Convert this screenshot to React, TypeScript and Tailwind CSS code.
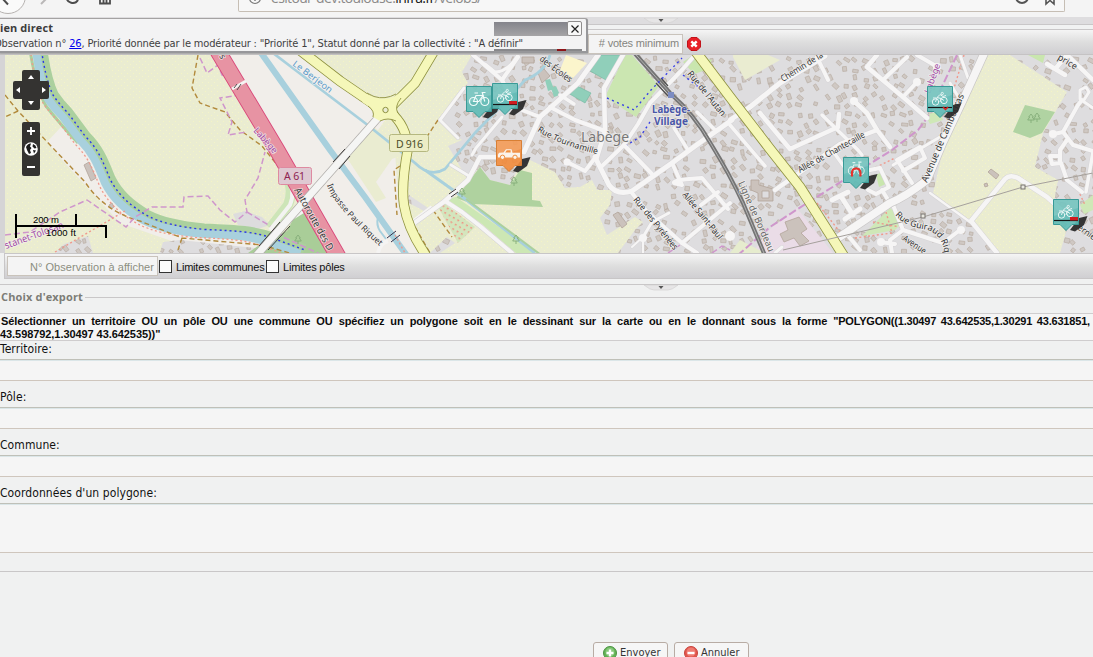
import React from "react";

type Pt = [number, number];

const RESIDENTIAL = [
  "472,55 462,72 468,83 440,117 440,123 462,140 448,146 468,180 480,167 490,180 510,185 518,168 530,160 555,172 565,188 580,187 592,180 597,190 612,190 610,205 600,218 607,235 635,217 643,222 635,230 618,253 997,253 970,223 933,193 943,150 985,55",
  "1010,55 1067,92 1043,133 1035,167 1058,180 1053,207 1066,232 1060,253 1093,253 1093,55",
  "55,253 64,244 88,236 93,253",
  "160,253 163,242 180,240 255,248 262,253",
  "409,195 428,208 424,211 407,202",
  "430,253 447,237 455,243 440,253",
];

const MINOR: { d: string; w: number }[] = [
  { d: "M598 55 L578 83 L540 117 L524 152", w: 5 },
  { d: "M500 157 H480 L468 180 L445 201 L410 226", w: 4.5 },
  { d: "M445 201 L462 212 L480 226 L512 253", w: 4 },
  { d: "M540 117 L517 108 L502 80 L473 55", w: 4 },
  { d: "M502 80 L518 57", w: 4 },
  { d: "M550 107 L575 120 L605 131", w: 4 },
  { d: "M560 95 L574 104", w: 3.5 },
  { d: "M623 55 L604 88 L605 131 L597 157", w: 4.5 },
  { d: "M595 157 L609 185 Q617 196 632 191 L672 163 L702 141 L732 120", w: 5 },
  { d: "M601 167 L624 145 L638 124 L650 103 L682 70 L695 55", w: 4 },
  { d: "M624 145 L652 174", w: 4 },
  { d: "M567 162 L585 171 L595 158", w: 4 },
  { d: "M632 193 L647 212 L682 243 L697 253", w: 4 },
  { d: "M682 243 L730 203", w: 4 },
  { d: "M672 163 L682 185 L674 183 Q672 180 702 178 L728 209", w: 4 },
  { d: "M701 205 L718 192", w: 4 },
  { d: "M643 237 L652 222 L669 213", w: 3 },
  { d: "M643 237 L643 253 M643 237 L632 247", w: 2 },
  { d: "M674 128 L688 150", w: 3.5 },
  { d: "M697 112 L716 131", w: 3.5 },
  { d: "M485 64 L495 72 Q508 72 518 55", w: 3 },
  { d: "M464 88 L440 120 L458 138", w: 3 },
  { d: "M451 165 L469 176", w: 3 },
  { d: "M502 117 L476 148 L472 155", w: 3 },
  { d: "M750 107 L780 83 L825 56", w: 5 },
  { d: "M760 113 L790 149 L838 127 L839 114", w: 4.5 },
  { d: "M730 120 L750 107", w: 4.5 },
  { d: "M822 115 L858 150 L862 155", w: 3.5 },
  { d: "M817 57 L828 80", w: 4 },
  { d: "M854 101 L867 113 L877 130 L890 147", w: 4.5 },
  { d: "M877 130 L840 144 L775 190", w: 4.5 },
  { d: "M832 150 L845 168", w: 3.5 },
  { d: "M877 55 L867 67 L903 97 L927 118", w: 4.5 },
  { d: "M907 57 L883 80 M903 97 L917 82 M917 55 L936 66", w: 4 },
  { d: "M950 83 L962 103", w: 3 },
  { d: "M960 55 L968 78", w: 3 },
  { d: "M897 160 L912 183 M897 160 L920 147 L925 158 L903 171", w: 4 },
  { d: "M870 170 L880 168 L889 187 L876 194 L868 190 M882 190 L890 203", w: 4 },
  { d: "M832 200 L848 192 M842 198 L853 215 M845 219 L860 209", w: 5 },
  { d: "M940 137 L893 165", w: 3 },
  { d: "M893 205 L903 230 L943 243 L960 230", w: 4 },
  { d: "M903 230 L890 240 L892 253 M880 242 L895 244", w: 4 },
  { d: "M845 232 L860 250", w: 4 },
  { d: "M930 193 L970 222", w: 2.5 },
  { d: "M997 253 L971 221 L1005 179 Q1010 174 1018 178 L1047 197 L1060 209", w: 4.5 },
  { d: "M1047 64 L1065 75 M1056 68 L1067 55 L1093 80", w: 4.5 },
  { d: "M1082 100 L1078 105 L1063 132 L1054 134", w: 4 },
  { d: "M1063 132 L1073 145 L1093 151 M1060 156 L1050 156 L1052 164 L1061 163 L1067 180 L1082 192 M1060 163 V150 L1067 140", w: 4 },
  { d: "M1093 108 L1080 99 L1080 90 L1086 87 L1089 92 L1084 100", w: 3 },
  { d: "M1086 192 L1093 152", w: 3.5 },
  { d: "M730 125 L765 166", w: 3.5 },
  { d: "M775 253 L782 247", w: 3 },
];

const RIVER =
  "M36 50 Q40 82 48 99 Q54 108 63 117 L80 140 C94 154 98 166 105 183 Q116 205 143 220 Q162 230 200 233.500 C235 235 250 236 267 242 L300 254";
const RAILWAY = "M630 48 L670 93 Q694 114 711 144 Q729 173 743 203 L766 258";
const AVENUE = "M988 45 L963 100 L943 142 L927 180 Q905 197 890 203 L838 238";

function seeded(seed: number) {
  let s = seed;
  return () => {
    s = (s * 16807) % 2147483647;
    return s / 2147483647;
  };
}

function makeHouses(): string {
  const rnd = seeded(4711);
  let d = "";
  for (let y = 58; y < 253; y += 9) {
    for (let x = 8; x < 1093; x += 9.5) {
      const keep = rnd();
      const cx = x + rnd() * 5;
      const cy = y + rnd() * 5;
      const a = rnd() * 1.5;
      const w = 1.7 + rnd() * 1.5;
      const h = 1.4 + rnd() * 0.9;
      if (keep < 0.22) continue;
      const pts = ([[-w, -h], [w, -h], [w, h], [-w, h]] as Pt[]).map(([px, py]) => {
        const qx = cx + px * Math.cos(a) - py * Math.sin(a);
        const qy = cy + px * Math.sin(a) + py * Math.cos(a);
        return `${qx.toFixed(1)} ${qy.toFixed(1)}`;
      });
      d += `M${pts.join("L")}Z`;
    }
  }
  return d;
}

const HOUSES = makeHouses();

function Label(props: {
  x: number; y: number; r?: number; len?: number; size?: number; fill?: string; bold?: boolean; children: string;
}) {
  const { x, y, r = 0, len, size = 9, fill = "#333", bold, children } = props;
  return (
    <text
      x={x}
      y={y}
      transform={`rotate(${r} ${x} ${y})`}
      textLength={len}
      lengthAdjust="spacingAndGlyphs"
      fontSize={size}
      fontFamily="Noto Sans, sans-serif"
      fontWeight={bold ? 700 : 400}
      fill={fill}
      stroke="#f4f2f0"
      strokeWidth={1.6}
      strokeOpacity={0.75}
      paintOrder="stroke"
    >
      {children}
    </text>
  );
}

function CurvedLabel({ id, d, size = 8.5, children }: { id: string; d: string; size?: number; children: string }) {
  return (
    <>
      <path id={id} d={d} fill="none" />
      <text fontSize={size} fontFamily="Noto Sans, sans-serif" fill="#333" stroke="#f4f2f0" strokeWidth={1.6} strokeOpacity={0.75} paintOrder="stroke">
        <textPath href={`#${id}`}>{children}</textPath>
      </text>
    </>
  );
}

function Bike() {
  return (
    <g fill="none" stroke="#f1fbfa" strokeWidth={1.2}>
      <circle cx={7.5} cy={15.5} r={4} />
      <circle cx={18.8} cy={15.5} r={4} />
      <path d="M7.5 15.5 L10 9.5 H17 L12.8 15.5 Z M17 9.5 L18.8 15.5 M8.5 7 H12 M17 9.5 L16.3 6.5 H19.5" />
    </g>
  );
}

function Rider() {
  return (
    <g fill="none" stroke="#e8f6f5" strokeWidth={1}>
      <circle cx={8.5} cy={16} r={3.2} />
      <circle cx={17} cy={14.5} r={3.2} />
      <path d="M8.500 16 L10 11.500 L14 12.500 L13 16 M10 11.500 L13 8.500 L16 10.500 L19 9.500 M14 12.500 L17 14.500 M6 12 H9" />
      <circle cx={15.300} cy={7.500} r={1.100} />
    </g>
  );
}

function Marker({ x, y, color, edge, kind }: { x: number; y: number; color: string; edge: string; kind: string }) {
  return (
    <g transform={`translate(${x} ${y})`}>
      <path d="M17 31 L26 19 L34.5 17 L31 26 L22 32.5 Z" fill="#2b2b2a" fillOpacity={0.94} />
      <path d="M0.5 0.5 H25.5 V25.5 H19 L13 31.5 L7 25.5 H0.5 Z" fill={color} fillOpacity={0.9} stroke={edge} />
      <path d="M1 1 H25 V9 L1 17 Z" fill="#fff" fillOpacity={0.14} />
      {kind === "bike" && <Bike />}
      {kind === "rider" && (
        <>
          <Rider />
          <path d="M1 21.5 H25" stroke="#151515" strokeWidth={1.2} />
          <rect x={17} y={18} width={8} height={3.4} fill="#cf1b1f" />
        </>
      )}
      {kind === "rider2" && (
        <>
          <Rider />
          <path d="M1 21.5 H25" stroke="#151515" strokeWidth={1.2} />
          <path d="M16 21 L18.5 23.5 L21 21" fill="none" stroke="#dd1c1c" strokeWidth={1.5} />
        </>
      )}
      {kind === "arch" && (
        <>
          <g transform="translate(2.500 -1) scale(0.82 0.95)" opacity={0.85}>
            <Bike />
          </g>
          <path d="M9 19.5 V15.500 A4.2 4.2 0 0 1 17.4 15.500 V19.5" fill="none" stroke="#e6332c" strokeWidth={2.200} />
        </>
      )}
      {kind === "truck" && (
        <>
          <path d="M2 14.5 L3 12.8 L7.5 12.5 L10 9.3 H15.5 L16.5 12.8 H24 V17.5 H2 Z" fill="#fbf3ea" />
          <path d="M9.2 12.5 L10.8 10.3 H14.6 V12.5 Z" fill="#f08f3e" />
          <circle cx={6.5} cy={17.3} r={2.2} fill="#fbf3ea" stroke="#f08f3e" />
          <circle cx={19} cy={17.3} r={2.2} fill="#fbf3ea" stroke="#f08f3e" />
        </>
      )}
    </g>
  );
}

function Tree({ x, y }: { x: number; y: number }) {
  return <path d={`M${x} ${y - 5} l-2.3 3 h1 l-2 3 h6.6 l-2 -3 h1 Z M${x} ${y + 1} v3`} fill="none" stroke="#84ad79" strokeWidth={0.9} />;
}

function YellowRoad({ d, w }: { d: string; w: number }) {
  return (
    <>
      <path d={d} fill="none" stroke="#8e913f" strokeWidth={w + 1.6} />
      <path d={d} fill="none" stroke="#f5f7b9" strokeWidth={w} />
    </>
  );
}

function MapView() {
  return (
    <svg className="block h-[198px] w-[1088px]" viewBox="5 55 1088 198">
      <defs>
        <clipPath id="res">
          {RESIDENTIAL.map((p) => (
            <polygon key={p} points={p} />
          ))}
        </clipPath>
        <pattern id="speckle" width={6} height={6} patternUnits="userSpaceOnUse">
          <rect x={1} y={1} width={1} height={1} fill="#fbfbbb" />
          <rect x={4} y={4} width={1} height={1} fill="#fafac4" />
        </pattern>
        <pattern id="orchard" width={5} height={5} patternUnits="userSpaceOnUse" patternTransform="rotate(30)">
          <rect x={1} y={1} width={2} height={1.4} fill="#f09384" />
        </pattern>
      </defs>

      <rect x={5} y={55} width={1088} height={198} fill="#eaecd1" />
      <rect x={5} y={55} width={1088} height={198} fill="url(#speckle)" opacity={0.6} />
      <polygon points="220,55 302,55 378,106 385,120 366,148 395,150 398,200 405,227 420,253 336,253" fill="#f1eeea" />
      <polygon points="347,158 374,127 406,154 392,159 376,182 386,198 376,202" fill="#eaecd1" />
      <polygon points="47,142 61,127 78,136 98,168 108,195 140,222 180,233 265,243 262,253 180,244 120,223 62,160" fill="#f1eeea" />
      <polygon points="233,214 245,211 262,217 270,225 258,229 238,225" fill="#dddcdd" />
      {RESIDENTIAL.map((p) => (
        <polygon key={p} points={p} fill="#dedddf" />
      ))}
      <path d={HOUSES} fill="#cfc8c3" stroke="#b9ada4" strokeWidth={0.7} clipPath="url(#res)" />
      <polygon points="733,57 745,80 780,60 768,55 733,55" fill="#eaecd1" />
      <polygon points="797,208 833,253 752,253 770,229" fill="#eadce7" />
      <polygon points="740,240 730,253 765,253" fill="#e6ecce" />
      <polygon points="625,55 632,55 659,86 636,117 605,97" fill="#cbe6b1" />
      <polygon points="600,55 622,55 606,80 590,71" fill="#90cfba" stroke="#70b7a0" strokeWidth={0.6} />
      <polygon points="575,85 591,93 585,103 568,93" fill="#90cfba" stroke="#70b7a0" strokeWidth={0.6} />
      <path d="M545 80 l5 -1 l4 10 l-6 2 Z M551 88 l5 -2 l4 9 l-6 2 Z" fill="#90cfba" />
      <polygon points="566,55 587,63 573,78 560,70" fill="#fbf5cc" />
      <polygon points="683,62 693,55 712,60 706,70 694,74" fill="#c9e6ae" />
      <polygon points="1025,105 1055,112 1042,133 1030,138 1013,132" fill="#b0d3a2" />
      <polygon points="1028,55 1045,55 1043,63" fill="#c9e6ae" />
      <polygon points="876,175 884,171 888,183 879,187" fill="#c9e6ae" />
      <polygon points="862,236 890,208 905,220 895,230 868,235" fill="#cfe8b7" />
      <polygon points="925,115 940,111 943,120 930,124" fill="#cfe8b7" />
      <polygon points="1080,205 1093,195 1093,210 1084,214" fill="#cfe8b7" />
      <g fill="#cbc2bc" stroke="#b3a59b" strokeWidth={0.8}>
        <path d="M84 165 l5 -3 l7 16 l-5 3 Z M109 205 l3 -2 l2 4 l-3 2 Z" />
        <path d="M785 222 l14 -5 l8 12 l-6 4 l8 8 l-9 5 l-6 -8 l-10 4 l-4 -8 l8 -4 Z" />
        <path fillRule="evenodd" d="M751 180 h8 v5 l14 4 v12 h-15 v-8 l-7 -3 Z M762 191 v7 h7 v-7 Z" />
        <path d="M988 172 l3 -3 l8 6 l-3 4 Z M984 184 l3 -1 l1 3 l-3 1 Z" />
        <path d="M613 215 l5 -3 l9 12 l-5 4 Z" />
        <path d="M538 73 l6 -4 l6 7 l-8 7 Z M522 57 h12 v6 h-12 Z" />
      </g>

      <polygon points="480,167 490,180 510,185 520,170 532,173 532,200 540,201 543,207 473,204 456,198" fill="#afd29f" />
      <polygon points="447,199 456,197 536,253 516,253 482,224" fill="#cce7b4" />
      <polygon points="437,205 445,204 475,227 458,243" fill="#d4e5bd" />
      <polygon points="437,205 445,204 475,227 458,243" fill="url(#orchard)" />
      <polygon points="248,253 262,243 287,231 300,206 314,205 340,253" fill="#a9cd98" />
      <path d="M287 178 Q294 190 288 205 L270 228" fill="none" stroke="#cde5b8" strokeWidth={10} />

      <path d="M30 50 Q36 88 46 106 Q60 124 78 143" fill="none" stroke="#abd09e" strokeWidth={3} />
      <path d={RIVER} fill="none" stroke="#abd09e" strokeWidth={14} transform="translate(4 -3)" />
      <path d={RIVER} fill="none" stroke="#a8d0dd" strokeWidth={8} />
      <path d={RIVER} fill="none" stroke="#2a36ee" strokeWidth={1.4} strokeDasharray="2 3" transform="translate(5 -4)" />
      <path d={RIVER} fill="none" stroke="#f2998c" strokeWidth={1.3} strokeDasharray="2 2.5" transform="translate(-5 4)" />

      <path d="M259 50 L330 150 L365 197 L410 260" fill="none" stroke="#a8d0dd" strokeWidth={6.2} />
      <path d="M273 53 L290 66 L365 123 L415 163 Q430 178 445 169 L475 133 L505 102 L525 80 Q545 72 550 55" fill="none" stroke="#a8d0dd" strokeWidth={2.7} />
      <path d="M425 170 L460 195 L535 253" fill="none" stroke="#a8d0dd" strokeWidth={3} />
      <path d="M466 199 L541 255" fill="none" stroke="#abd09e" strokeWidth={2} />
      <path d="M378 217 q-2 8 2 14 l6 8" fill="none" stroke="#a8d0dd" strokeWidth={2} />
      <path d="M407 226 L432 207 M378 253 Q380 243 388 241" fill="none" stroke="#f5f4f3" strokeWidth={4} />

      <g fill="none" stroke="#b28a3c" strokeWidth={1.4} strokeDasharray="5 3">
        <path d="M5 95 L18 111 L85 182 Q105 212 140 221 L182 238 L262 245 L300 256 M18 111 L5 117 M182 238 L178 250" />
        <path d="M198 55 L192 88 L200 103 L225 112 L240 130 L262 146 L278 166" />
        <path d="M400 166 L394 170 L397 215 M411 220 L430 253 M433 210 L452 237 M438 120 L426 138" />
      </g>
      <g fill="none" stroke="#cf96cc" strokeWidth={1.5} strokeDasharray="6 3">
        <path d="M200 58 L207 73 L218 65 L222 75 L235 85 L247 85 L240 95 L220 98 L226 110 L232 122 L228 135 L247 132" />
        <path d="M5 235 L30 232 L60 212 L87 200 L126 227 L135 217 L152 207 L183 207 L184 197 L208 196 L220 210 L235 222 L247 212 L245 200 L258 178 L265 152 M247 212 L270 226 L285 238 L322 255" />
        <path d="M668 253 L680 245 M712 253 L722 246 L730 250" />
      </g>
      <path d="M957 55 L927 118 L918 130 L892 150 L807 203 L770 227 L738 255" fill="none" stroke="#cf96cc" strokeWidth={2} strokeDasharray="8 3" />
      <path d="M55 252 L125 211 M817 203 L840 232 M886 212 L892 233 L855 238 M964 55 L952 95 M395 235 L405 253 M873 222 L905 228 M1078 190 L1085 205 M860 175 L895 158" fill="none" stroke="#f0998c" strokeWidth={1.4} strokeDasharray="2 2.4" />

      {MINOR.map((r) => (
        <path key={"c" + r.d} d={r.d} fill="none" stroke="#d6d4d6" strokeWidth={r.w + 1} strokeLinecap="round" strokeLinejoin="round" />
      ))}
      {MINOR.map((r) => (
        <path key={r.d} d={r.d} fill="none" stroke="#f6f5f5" strokeWidth={r.w} strokeLinecap="round" strokeLinejoin="round" />
      ))}
      <g fill="#f6f5f5">
        <circle cx={567} cy={162} r={3.6} />
        <circle cx={854} cy={101} r={4} />
        <circle cx={917} cy={82} r={4} />
        <circle cx={937} cy={67} r={4} />
        <circle cx={643} cy={238} r={4} />
        <circle cx={961} cy={230} r={4} />
        <circle cx={1053} cy={134} r={4} />
        <circle cx={881} cy={242} r={4} />
        <circle cx={730} cy={236} r={5} />
      </g>
      <path d={AVENUE} fill="none" stroke="#c9c7c7" strokeWidth={9} />
      <path d={AVENUE} fill="none" stroke="#f6f5f5" strokeWidth={7.6} />

      <path d="M287 178 Q296 190 290 205 L270 230 M313 205 L292 218" fill="none" stroke="#f3f3f1" strokeWidth={4} />
      <path d="M216 48 L277 150 L340 260" fill="none" stroke="#d9487a" strokeWidth={16.6} />
      <path d="M216 48 L277 150 L340 260" fill="none" stroke="#e793a3" strokeWidth={14.8} />
      <path d="M232 89 L246 81" stroke="#f5f4f3" strokeWidth={3} />
      <path d="M234 88 l3 -4 M237 90 l4 -6" stroke="#54504e" />
      <path d="M378 118 L256 256" stroke="#aeaba8" strokeWidth={8.4} />
      <path d="M378 118 L256 256" stroke="#f5f5f4" strokeWidth={7} />
      <path d="M333 162 L345 149 M339 169 L350 156 M259 246 L280 222 M268 250 L290 226" stroke="#3c3a39" strokeWidth={1} />

      <path d={RAILWAY} fill="none" stroke="#747474" strokeWidth={4.2} />
      <path d={RAILWAY} fill="none" stroke="#b8b8b8" strokeWidth={0.9} />
      <path d="M656 83 L668 96 M661 78 L668 86" stroke="#4e4e4e" strokeWidth={1.3} />
      <g fill="none" stroke="#3a42e8" strokeWidth={1.4} strokeDasharray="2 3.500">
        <path d="M607 98 L634 110 L651 90 L682 58 M683 75 L705 92 M650 122 L640 137 L627 145" />
      </g>

      <YellowRoad d="M292 44 L340 81 L378 107" w={9} />
      <YellowRoad d="M436 48 L415 83 L393 105" w={8.5} />
      <YellowRoad d="M391 113 Q406 125 408 148 Q401 185 404 205 Q408 230 427 257" w={8.5} />
      <YellowRoad d="M693 48 L730 97 L770 149 L800 187 L845 258" w={9} />
      <path d="M367 94 L374 97 Q385 100 393 97 L402 92 L400 100 Q394 107 398 114 L402 124 L393 120 Q387 118 380 121 L373 117 Q375 111 368 106 L362 102 Z" fill="#f5f7b9" />
      <path d="M367 93 L374 96.500 Q385 100 396 94 M401 98 Q394 107 398 113 M396 121 Q388 117 380 121 M373 117 Q375 111 368 106" fill="none" stroke="#8e913f" strokeWidth={0.9} />
      <circle cx={385.5} cy={110} r={2.7} fill="#eaecd1" stroke="#8e913f" />
      <path d="M449 194 L456 189 M451 197 L458 192" stroke="#3c3a39" />

      <path d="M783 250 L923 217 L1023 187 L1093 173" fill="none" stroke="#a5a09c" strokeWidth={1} />
      <rect x={921} y={214} width={4} height={4} fill="#e9e8e0" stroke="#77736e" />
      <rect x={1021} y={185} width={4} height={4} fill="#e9e8e0" stroke="#77736e" />
      <path d="M387 238 L396 231 M391 242 L400 235" stroke="#35324a" strokeWidth={1} />
      <rect x={668} y={92} width={6} height={6} fill="#7c8cc2" />
      <Tree x={462} y={193} />
      <Tree x={514} y={182} />
      <Tree x={516} y={240} />
      <Tree x={1031} y={119} />
      <Tree x={1037} y={118} />
      <Tree x={298} y={240} />

      <Label x={292} y={65} r={37} len={47} fill="#5b9ccb">Le Berjeon</Label>
      <Label x={253} y={131} r={48} len={31} fill="#a14aa6">Labège</Label>
      <Label x={930} y={94} r={-70} len={31} fill="#a14aa6">Labège</Label>
      <Label x={219} y={56} r={62} size={9}>s</Label>
      <Label x={294} y={190} r={61} len={70} size={10}>Autoroute des D</Label>
      <CurvedLabel id="paul" d="M327 185 Q334 207 384 250">Impasse Paul Riquet</CurvedLabel>
      <Label x={539} y={60} r={37} len={38}>des Écoles</Label>
      <CurvedLabel id="tour" d="M537 131 Q562 147 606 156">Rue Tournamille</CurvedLabel>
      <Label x={633} y={200} r={51} len={65}>Rue des Pyrénées</Label>
      <Label x={682} y={195} r={51} len={58}>Allée Saint-Paul</Label>
      <Label x={687} y={74} r={51} len={55}>Rue de l&apos;Autan</Label>
      <Label x={783} y={82} r={-32} len={48}>Chemin de la</Label>
      <Label x={800} y={173} r={-29} len={75}>Allée de Chantecaille</Label>
      <Label x={927} y={183} r={-67} len={95} size={9.5}>Avenue de Cambouras</Label>
      <Label x={738} y={183} r={66} len={76} size={9.5} fill="#666">Ligne de Bordeau</Label>
      <CurvedLabel id="guir" size={8.8} d="M895 215 Q905 227 928 230 Q944 236 945 258 V270">Rue Guiraud Riquier</CurvedLabel>
      <Label x={902} y={240} r={33} len={26}>Avenue</Label>
      <Label x={1057} y={59} r={31} len={21}>price</Label>
      <Label x={1077} y={229} r={35} len={20}>ernie</Label>
      <Label x={6} y={249} r={-20} len={62} size={10} fill="#a14aa6">stanet-Tolosan</Label>
      <Label x={581} y={142} size={14} len={48} fill="#777">Labège</Label>
      <Label x={652} y={113} size={10} len={38} bold fill="#4a57a8">Labège-</Label>
      <Label x={654} y={124.5} size={10} len={34} bold fill="#4a57a8">Village</Label>

      <rect x={278.500} y={167.500} width={33} height={17} rx={2} fill="#dfc9d2" stroke="#de8aa0" />
      <text x={284} y={180} fontSize={10.5} fontFamily="Noto Sans, sans-serif" fill="#8e2350" textLength={21}>A 61</text>
      <rect x={389.500} y={134.500} width={39} height={17} rx={2} fill="#ecedc5" stroke="#b5b880" />
      <text x={396} y={147.500} fontSize={10.5} fontFamily="Noto Sans, sans-serif" fill="#4b4c28" textLength={27}>D 916</text>

      <Marker x={466} y={86} color="#5dbab5" edge="#399a97" kind="bike" />
      <Marker x={492} y={83} color="#5dbab5" edge="#399a97" kind="rider" />
      <Marker x={496} y={140} color="#f28b3b" edge="#d87f34" kind="truck" />
      <Marker x={843} y={157} color="#5dbab5" edge="#399a97" kind="arch" />
      <Marker x={927} y={86} color="#5dbab5" edge="#399a97" kind="rider2" />
      <Marker x={1053} y={199} color="#5dbab5" edge="#399a97" kind="rider" />

      <g fill="#343331">
        <path d="M24 70 h14 a2 2 0 0 1 2 2 v9 h7 a2 2 0 0 1 2 2 v14 a2 2 0 0 1 -2 2 h-7 v9 a2 2 0 0 1 -2 2 h-14 a2 2 0 0 1 -2 -2 v-9 h-7 a2 2 0 0 1 -2 -2 v-14 a2 2 0 0 1 2 -2 h7 v-9 a2 2 0 0 1 2 -2 Z" />
        <rect x={22} y={122} width={18} height={54} rx={2} />
      </g>
      <path d="M31 75 l3 4 h-6 Z M31 105 l3 -4 h-6 Z M16 90 l4 -3 v6 Z M46 90 l-4 -3 v6 Z" fill="#fff" />
      <path d="M27 131 h8 M31 127 v8 M27 167 h8" stroke="#fff" strokeWidth={1.8} />
      <circle cx={31} cy={149} r={6.8} fill="#fff" />
      <path d="M26 147 q2 -4 5 -3.500 l-1 3 l1.500 1.500 l-1.500 2 l1 3 l-2 1 l-2 -4 Z M33 144 q3 1 3.500 4 l-2 0.500 l-2 -2 Z M33 150 l3 0.500 l-2 3 Z" fill="#1c1c1c" />

      <path d="M16 214 V238 M76 214 V226 M106 226 V238 M15 226 H107" stroke="#000" strokeWidth={2} fill="none" />
      <text x={33} y={222.500} fontSize={9.5} fontFamily="Liberation Sans, sans-serif" textLength={26}>200 m</text>
      <text x={46} y={235.500} fontSize={9.5} fontFamily="Liberation Sans, sans-serif" textLength={30}>1000 ft</text>
    </svg>
  );
}

function BrowserBar() {
  return (
    <div className="flex h-[17px] overflow-hidden bg-[#f4f4f4]">
      <svg className="block h-[17px] w-[238px] shrink-0" viewBox="0 0 238 17">
        <circle cx={8} cy={-4} r={17.500} fill="#fafafa" stroke="#b6b2b0" />
        <path d="M8 4.500 L2 -2 M0 -2 H14" stroke="#4c4c4c" strokeWidth={2} fill="none" />
        <path d="M41 4 L47 -2" stroke="#b9b7b7" strokeWidth={2} />
        <path d="M66.500 -3 A6.200 6.200 0 0 0 78 0" stroke="#4c4c4c" strokeWidth={2} fill="none" />
        <path d="M100 -4 V3.500 H110 V-4 M103.500 3 V0 M106.500 3 V0" stroke="#4c4c4c" strokeWidth={1.800} fill="none" />
      </svg>
      <div className="flex h-[12px] w-[827px] overflow-hidden rounded-b-[2px] border border-t-0 border-[#c6beb4] bg-[#f7f7f7]">
        <svg className="block h-[11px] w-[32px] shrink-0" viewBox="239 0 32 11">
          <circle cx={255} cy={-2} r={5.500} fill="none" stroke="#777" strokeWidth={1.200} />
          <path d="M255 -3 V1" stroke="#777" strokeWidth={1.400} />
        </svg>
        <div className="-mt-[15px] h-[22px] flex-1 whitespace-nowrap font-['Open_Sans',sans-serif] text-[14px] leading-[26px] tracking-[-0.66px] text-[#8c8a8a]">
          esitour-dev.toulouse.<span className="text-[#111]">infra.fr</span>/velobs/
        </div>
        <svg className="block h-[11px] w-[64px] shrink-0" viewBox="1000 0 64 11">
          <circle cx={1022} cy={-3} r={6} fill="none" stroke="#555" strokeWidth={2} />
          <path d="M1046 -6 V4 L1050 0.500 L1054 4 V-6" fill="none" stroke="#555" strokeWidth={1.600} />
        </svg>
      </div>
    </div>
  );
}

function SplitHandle({ className }: { className: string }) {
  return (
    <svg className={className} viewBox="0 0 34 6">
      <path d="M0 0 H34 Q28 5 24 5 H10 Q6 5 0 0 Z" fill="#e6e5e6" stroke="#d0cecf" strokeWidth={0.6} />
      <path d="M14.500 1 H19.500 L17 4 Z" fill="#555" />
    </svg>
  );
}

function DirectLinkWindow() {
  return (
    <div className="absolute left-0 top-[18px] h-[35px] w-[588px] overflow-hidden rounded-tr-[3px] border-b-2 border-r-2 border-[#97979a] bg-[#f3f3f4] border-t border-t-[#a4a2a2] shadow-[0_1px_1px_#aaa]">
      <div className="absolute left-[494px] top-[3px] h-[14px] w-[74px] bg-linear-to-b from-[#84848b] to-[#a5a4a6]" />
      <div className="absolute left-[494px] top-[30px] h-[3px] w-[88px] bg-[#88888b]" />
      <div className="absolute left-[557px] top-[30px] h-[2px] w-[9px] bg-[#8d1418]" />
      <div className="absolute left-[567px] top-[2px] flex h-[15px] w-[15px] items-center justify-center rounded-[2px] border border-[#8f8d8d] bg-[#f8f8f8]">
        <svg className="h-[8px] w-[8px]" viewBox="0 0 8 8">
          <path d="M0.500 0.500 L7.500 7.500 M7.500 0.500 L0.500 7.500" stroke="#222" strokeWidth={1.200} />
        </svg>
      </div>
      <div className="mt-[2px] h-[14px] whitespace-nowrap font-['Open_Sans',sans-serif] text-[11px] font-bold leading-[14px] tracking-[0.08px] text-[#3c3c3c]">ien direct</div>
      <div className="relative -ml-[6px] mt-[2px] h-[14px] whitespace-nowrap font-['DejaVu_Sans_Condensed','DejaVu_Sans',sans-serif] text-[11px] leading-[14px] tracking-[-0.17px] text-[#3f3f3f] [font-stretch:condensed]">
        Observation n° <span className="text-[#0000ee] underline">26</span>, Priorité donnée par le modérateur : "Priorité 1", Statut donné par la collectivité : "A définir"
      </div>
    </div>
  );
}

function FormField({ label, first, tall }: { label: string; first?: boolean; tall?: boolean }) {
  return (
    <div>
      <div
        className={
          (first ? "h-[18px] " : "h-[26px] pt-[8px] ") +
          "font-['DejaVu_Sans_Condensed','DejaVu_Sans',sans-serif] text-[12px] leading-[16px] tracking-[0.08px] text-[#111] [font-stretch:condensed] whitespace-nowrap"
        }
      >
        {label}
      </div>
      <div className={(tall ? "h-[50px] " : "h-[22px] ") + "border-y border-b-[#cfc6bd] border-t-[#bfc0b8] bg-[#f5f5f5] shadow-[inset_0_1px_0_#dbe6e8]"} />
    </div>
  );
}

function ActionButton({ label, tone }: { label: string; tone: "add" | "remove" }) {
  const add = tone === "add";
  return (
    <button className="flex h-[22px] w-[75px] items-center gap-[3px] rounded-[3px] border border-[#b8aca4] bg-[#f6f6f6] pl-[9px] font-['DejaVu_Sans_Condensed','DejaVu_Sans',sans-serif] text-[11px] text-[#333] [font-stretch:condensed]">
      <svg className="h-[14px] w-[14px] shrink-0" viewBox="0 0 14 14">
        <circle cx={7} cy={7} r={6.500} fill={add ? "#63b256" : "#e2574e"} stroke={add ? "#4c9343" : "#c6443d"} />
        <circle cx={7} cy={6} r={4.500} fill={add ? "#86c97a" : "#ef7c72"} />
        <path d={add ? "M7 3.500 V10.500 M3.500 7 H10.500" : "M3.500 7 H10.500"} stroke="#fff" strokeWidth={2.400} />
      </svg>
      {label}
    </button>
  );
}

function CheckItem({ label, className }: { label: string; className: string }) {
  return (
    <div className={"flex items-center " + className}>
      <span className="h-[13px] w-[13px] shrink-0 border border-[#333] bg-[#fbfbfb]" />
      <span className="ml-[4px] mt-px whitespace-nowrap font-['Liberation_Sans',sans-serif] text-[11px] tracking-[-0.2px] text-[#111]">{label}</span>
    </div>
  );
}

export default function App() {
  return (
    <div className="relative h-[657px] w-[1093px] overflow-hidden bg-[#f0f1f1]">
      <BrowserBar />
      <div className="flex h-[7px] justify-center bg-[#dedddf] pl-[229px] pt-[1px]">
        <SplitHandle className="h-[6px] w-[34px]" />
      </div>
      <div className="h-[6px] border-y border-[#c9c7c8] bg-[#f1f2f2]" />
      <div className="flex h-[25px] items-center border-b border-[#c5c3c4] bg-linear-to-b from-[#f5f5f5] via-[#dedede] to-[#d0cfd2] pl-[588px] pt-[3px]">
        <div className="flex h-[20px] w-[95px] items-center justify-end whitespace-nowrap border border-[#c9c3bb] bg-[#f4f4f4] pr-[3px] font-['Liberation_Sans',sans-serif] text-[11px] tracking-[-0.2px] text-[#85857f]">
          # votes minimum
        </div>
        <svg className="ml-[4px] h-[14px] w-[14px]" viewBox="0 0 14 14">
          <path d="M4 0.500 H10 L13.500 4 V10 L10 13.500 H4 L0.500 10 V4 Z" fill="#e81f27" stroke="#c1131a" />
          <path d="M4.300 4.300 L9.700 9.700 M9.700 4.300 L4.300 9.700" stroke="#fff" strokeWidth={2.400} />
        </svg>
      </div>
      <div className="h-[198px] border-l-[5px] border-[#d5d4d6]">
        <MapView />
      </div>
      <div className="h-[26px] pl-[4px]">
        <div className="flex h-[26px] items-start border border-r-0 border-[#c8c6c7] bg-linear-to-b from-[#f5f5f5] via-[#dedede] to-[#d0cfd2] pl-[2px] pt-[2px]">
          <div className="flex h-[20px] w-[151px] items-center justify-end whitespace-nowrap border border-[#c9c3bb] bg-[#f4f4f4] pr-[3px] pt-[2px] font-['Liberation_Sans',sans-serif] text-[11px] tracking-[0.05px] text-[#8b8e80]">
            N° Observation à afficher
          </div>
          <CheckItem label="Limites communes" className="ml-[1px] h-[21px] w-[107px]" />
          <CheckItem label="Limites pôles" className="h-[21px]" />
        </div>
      </div>
      <div className="h-[6px] border-b border-[#c9c7c8]" />
      <div className="h-[28px]">
        <div className="flex h-[6px] justify-center pl-[229px]">
          <SplitHandle className="h-[6px] w-[34px]" />
        </div>
        <div className="flex h-[12px] items-center">
          <span className="ml-[1px] mr-[2px] whitespace-nowrap font-['Open_Sans',sans-serif] text-[11px] font-bold leading-[12px] tracking-[0.15px] text-[#7c7c76]">Choix d'export</span>
          <span className="h-px flex-1 bg-[#c9c7c8]" />
        </div>
      </div>
      <div className="h-[28px] border-y border-[#cfcdce] bg-[#f5f5f5] pt-[1px] font-['Liberation_Sans',sans-serif] text-[11px] font-bold leading-[13px] text-[#0c0c0c]">
        <div className="ml-[1px] whitespace-nowrap tracking-[-0.1px] [word-spacing:3.1px]">
          Sélectionner un territoire OU un pôle OU une commune OU spécifiez un polygone soit en le dessinant sur la carte ou en le donnant sous la forme{" "}
          <span className="tracking-[-0.2px] [word-spacing:1.8px]">"POLYGON((1.30497 43.642535,1.30291 43.631851,</span>
        </div>
        <div className="whitespace-nowrap tracking-[-0.07px]">43.598792,1.30497 43.642535))"</div>
      </div>
      <FormField label="Territoire:" first />
      <FormField label="Pôle:" />
      <FormField label="Commune:" />
      <FormField label="Coordonnées d'un polygone:" tall />
      <div className="h-[19px] border-b border-[#c9c7c8]" />
      <div className="flex gap-[6px] pl-[593px] pt-[70px]">
        <ActionButton label="Envoyer" tone="add" />
        <ActionButton label="Annuler" tone="remove" />
      </div>
      <DirectLinkWindow />
    </div>
  );
}
